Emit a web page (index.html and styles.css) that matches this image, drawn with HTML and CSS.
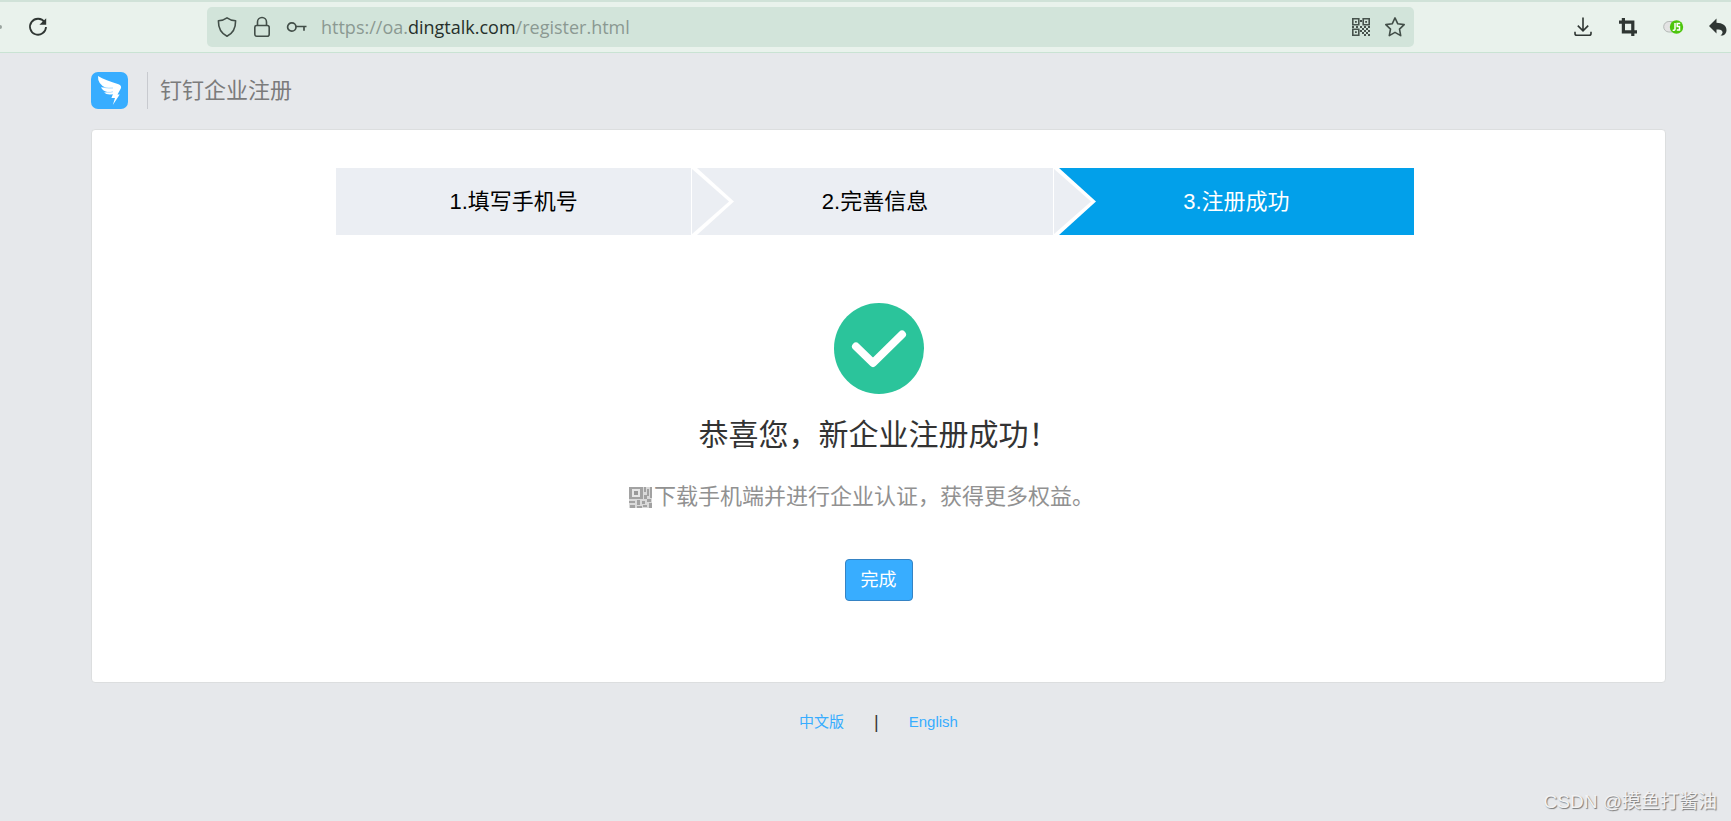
FILE: index.html
```html
<!DOCTYPE html>
<html lang="zh-CN">
<head>
<meta charset="utf-8">
<meta name="viewport" content="width=device-width, initial-scale=1">
<title>钉钉企业注册</title>
<link rel="stylesheet" href="styles.css">
</head>
<body>
<div class="browser-bar">
  <div class="nav-left">
    <span class="nav-dot"></span>
    <button class="icon-btn" aria-label="刷新">
      <svg width="22" height="22" viewBox="0 0 22 22"><path d="M17.6 6.2A8 8 0 1 0 19 11" fill="none" stroke="#2f3633" stroke-width="1.8"/><path d="M19.2 2.2v6.600h-6.800z" fill="#2f3633"/></svg>
    </button>
  </div>
  <div class="address">
    <button class="icon-btn" aria-label="跟踪保护">
      <svg width="22" height="22" viewBox="0 0 22 22"><path d="M11 1.800C8.500 3.600 5.500 4.500 2.400 4.700C2.300 11.500 4.500 17 11 20.200C17.500 17 19.700 11.500 19.600 4.700C16.500 4.500 13.500 3.600 11 1.800z" fill="none" stroke="#424e48" stroke-width="1.600" stroke-linejoin="round"/></svg>
    </button>
    <button class="icon-btn" aria-label="安全连接">
      <svg width="22" height="22" viewBox="0 0 22 22" fill="none" stroke="#424e48" stroke-width="1.600"><rect x="3.800" y="9.500" width="14.400" height="10.800" rx="2"/><path d="M6.500 9.500V6a4.500 4.500 0 0 1 9 0v3.500"/></svg>
    </button>
    <button class="icon-btn" aria-label="已保存的密码">
      <svg width="22" height="22" viewBox="0 0 22 22" fill="none" stroke="#424e48" stroke-width="1.700"><circle cx="5.800" cy="11" r="4.200"/><path d="M10 10.500H20.500M18 10.500v4.300"/></svg>
    </button>
    <div class="url" role="textbox" aria-label="地址">https://oa.<span class="url-host">dingtalk.com</span>/register.html</div>
    <button class="icon-btn" aria-label="二维码">
      <svg width="20" height="20" viewBox="0 0 20 20"><g fill="none" stroke="#46524c" stroke-width="1.600"><path d="M1.800 1.800h6v6h-6zM12.200 1.800h6v6h-6zM1.800 12.200h6v6h-6z"/></g><path fill="#46524c" d="M4 4h1.800v1.800H4zM14.200 4H16v1.800h-1.800zM4 14.200h1.800V16H4zM9 3h2v2H9zM1 9h2v2H1zM5 9h2v2H5zM9 9h2v2H9zM13 9h2v2h-2zM17 9h2v2h-2zM11 11h2v2h-2zM15 11h2v2h-2zM9 13h2v2H9zM13 13h2v2h-2zM17 13h2v2h-2zM11 15h2v2h-2zM15 15h2v2h-2zM13 17h2v2h-2zM17 17h2v2h-2z"/></svg>
    </button>
    <button class="icon-btn" aria-label="收藏">
      <svg width="22" height="22" viewBox="0 0 22 22"><path d="M11 1.900l2.800 5.900 6.400.8-4.700 4.500 1.200 6.500L11 16.400l-5.700 3.200 1.200-6.500L1.800 8.600l6.400-.8z" fill="none" stroke="#424e48" stroke-width="1.600" stroke-linejoin="round"/></svg>
    </button>
  </div>
  <div class="nav-right">
    <button class="icon-btn" aria-label="下载">
      <svg width="22" height="22" viewBox="0 0 22 22" fill="none" stroke="#2f3633" stroke-width="1.600"><path d="M11 1.500v13M5.800 9.600l5.200 5.200 5.200-5.200M3 15.800v1.700q0 1.800 1.800 1.800h12.400q1.800 0 1.800-1.800v-1.700"/></svg>
    </button>
    <button class="icon-btn" aria-label="截图">
      <svg width="22" height="22" viewBox="0 0 22 22" fill="none" stroke="#2f3633" stroke-width="3.200"><path d="M6.400 2v13.800H20M2 6.200h13.800V20"/></svg>
    </button>
    <button class="icon-btn" aria-label="脚本开关">
      <svg width="22" height="22" viewBox="0 0 22 22"><rect x="1.700" y="5.500" width="16" height="10.500" rx="5.200" fill="#e3e3e3" stroke="#b4b9b6"/><circle cx="14.500" cy="11" r="6.700" fill="#4cc60c"/><path d="M13 7v6q0 1.600-2.300 1.200M18.200 7.500h-3v3h2.300v3.500h-2.700" fill="none" stroke="#fff" stroke-width="1.500"/></svg>
    </button>
    <button class="icon-btn" aria-label="后退">
      <svg width="22" height="22" viewBox="0 0 22 22"><path d="M9.500 2.500v4.300C15.500 7 19.500 9.500 19.500 14.200c0 2.500-1.500 4.600-3.600 5.300h-2.400c1.800-1.500 2.600-2.900 1.700-4.300-.9-1.200-2.700-1.600-5.700-1.600v4L2 10z" fill="#2f3633"/></svg>
    </button>
  </div>
</div>

<div class="page">
  <header class="header">
    <svg class="logo" width="37" height="37" viewBox="0 0 37 37" role="img" aria-label="钉钉"><rect width="37" height="37" rx="7" fill="#38adff"/><path fill="#fff" d="M7 4C12 7 19 9.500 27.500 12.200Q31 13.500 29.800 16.500L26.500 22.500h2.200L21.800 33 24 26h-3.600l1.500-3.800Q16 23.500 13 20.500l4.300-.2Q11.600 19 10 15.200l4.800.6Q6.500 12 7 4z"/><path d="M14 15.600q3.500.8 8 .4M16.500 20.300q3 .4 5.500-.6" fill="none" stroke="#8dcfff" stroke-width=".7"/></svg>
    <h1 class="site-title">钉钉企业注册</h1>
  </header>

  <main class="card">
    <ol class="steps">
      <li class="step">1.填写手机号
        <svg class="step-arrow" width="43" height="67" viewBox="0 0 43 67"><path d="M0 0h6l37 33.500L6 67H0z" fill="#fff"/><path d="M1 1l37 32.500L1 66z" fill="#ebeef3"/></svg>
      </li>
      <li class="step">2.完善信息
        <svg class="step-arrow" width="43" height="67" viewBox="0 0 43 67"><path d="M0 0h6l37 33.500L6 67H0z" fill="#fff"/><path d="M1 1l37 32.500L1 66z" fill="#ebeef3"/></svg>
      </li>
      <li class="step step-current" aria-current="step">3.注册成功</li>
    </ol>
    <svg class="success-icon" width="90" height="91" viewBox="0 0 90 91" role="img" aria-label="成功"><ellipse cx="45" cy="45.500" rx="45" ry="45.500" fill="#2bc49b"/><path d="M22 43.500L39 60 68 31.500" fill="none" stroke="#fff" stroke-width="8" stroke-linecap="round" stroke-linejoin="round"/></svg>
    <h2 class="result-title">恭喜您，新企业注册成功！</h2>
    <p class="result-text">
      <svg width="23" height="21" viewBox="0 0 23 21"><path fill="#dadada" d="M0 0h23v21H0z"/><path fill="#a2a2a2" d="M0 0h14v12H0zM15 0h2v5h-2zM18 2h2v7h-2zM21 0h2v11h-2zM15 8h3v4h-3zM0 14h6v2H0zM8 13h3v5H8zM13 14h3v3h-3zM18 12h4v3h-4zM1 18h5v3H1zM8 19h5v2H8zM14 18h4v2h-4zM20 16h3v5h-3z"/><path fill="#e6e6e6" d="M3 2h8v8H3z"/><path fill="#999" d="M5 4h4v4H5z"/></svg>
      <span>下载手机端并进行企业认证，获得更多权益。</span>
    </p>
    <button class="done" type="button">完成</button>
  </main>

  <footer class="footer">
    <a href="#zh">中文版</a>
    <span class="footer-sep">|</span>
    <a href="#en">English</a>
  </footer>
</div>
<div class="watermark">CSDN @摸鱼打酱油</div>
</body>
</html>
```
FILE: styles.css
```css
* {
  box-sizing: border-box;
}

body {
  margin: 0;
  min-height: 100vh;
  display: flex;
  flex-direction: column;
  background: #e6e8eb;
  color: #333;
  font-family: "Liberation Sans", "Noto Sans CJK SC", sans-serif;
}

h1, h2, p, ol {
  margin: 0;
  padding: 0;
  font-weight: 400;
}

button {
  font-family: inherit;
  cursor: pointer;
}

.browser-bar {
  display: flex;
  align-items: center;
  height: 53px;
  border-top: 2px solid #d0e2d8;
  border-bottom: 1px solid #c9e3d3;
  background: #e9f2ec;
}

.icon-btn {
  display: flex;
  flex: none;
  padding: 0;
  border: 0;
  background: none;
}

.nav-left {
  display: flex;
  flex: none;
  align-items: center;
  gap: 25px;
  width: 207px;
}

.nav-dot {
  width: 2px;
  height: 4px;
  border-radius: 0 2px 2px 0;
  background: #9aa49f;
}

.address {
  display: flex;
  flex: 1;
  align-items: center;
  gap: 13px;
  height: 40px;
  padding: 0 8px 0 9px;
  border-radius: 5px;
  background: #d2e4da;
}

.url {
  flex: 1;
  color: #8b9992;
  font-family: "Open Sans", "Noto Sans", sans-serif;
  font-size: 18px;
  line-height: 24px;
}

.url-host {
  color: #26302b;
}

.nav-right {
  display: flex;
  flex: none;
  justify-content: flex-end;
  gap: 23px;
  width: 317px;
  padding-right: 2px;
}

.page {
  flex: 1;
  padding: 19px 65px 0 91px;
}

.header {
  display: flex;
  align-items: center;
  gap: 19px;
}

.site-title {
  padding-left: 12px;
  border-left: 1px solid #c8cacf;
  color: #7b7b7b;
  font-size: 22px;
  line-height: 37px;
}

.card {
  display: flex;
  flex-direction: column;
  align-items: center;
  margin-top: 20px;
  padding: 38px 0 81px;
  border: 1px solid #dcdedf;
  border-radius: 4px;
  background: #fff;
}

.steps {
  display: flex;
  align-self: stretch;
  gap: 6px;
  margin: 0 251px 0 244px;
  list-style: none;
}

.step {
  position: relative;
  flex: 1;
  background: #ebeef3;
  color: #000;
  font-size: 22px;
  line-height: 67px;
  text-align: center;
}

.step-current {
  background: #02a0ea;
  color: #fff;
}

.step-arrow {
  position: absolute;
  z-index: 1;
  top: 0;
  left: 100%;
}

.success-icon {
  margin-top: 68px;
}

.result-title {
  margin-top: 20px;
  color: #333;
  font-size: 30px;
  line-height: 42px;
}

.result-text {
  display: flex;
  align-items: center;
  gap: 2px;
  margin-top: 25px;
  padding-right: 34px;
  color: #919191;
  font-size: 22px;
  line-height: 32px;
}

.done {
  margin-top: 46px;
  padding: 0 15px;
  border: 1px solid #3583c4;
  border-radius: 4px;
  background: #38adff;
  color: #fff;
  font-size: 18px;
  line-height: 40px;
}

.footer {
  display: flex;
  justify-content: center;
  align-items: center;
  gap: 30px;
  margin-top: 26px;
  font-size: 15px;
  line-height: 26px;
}

.footer a {
  color: #38adff;
  text-decoration: none;
}

.footer-sep {
  color: #333;
  font-size: 18px;
}

.watermark {
  align-self: flex-end;
  padding: 0 14px 6px 0;
  color: #f2f2f3;
  font-size: 19px;
  line-height: 26px;
  text-shadow: 1px 1px 1px #777;
}
```
